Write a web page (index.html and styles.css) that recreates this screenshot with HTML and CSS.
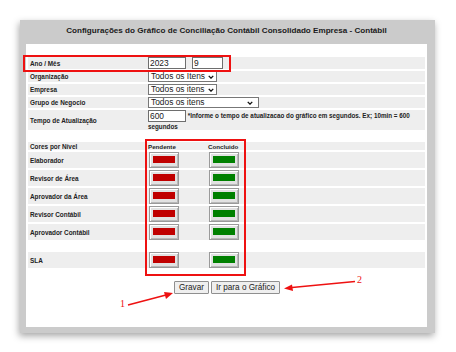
FILE: index.html
```html
<!DOCTYPE html>
<html lang="pt-BR">
<head>
    <meta charset="UTF-8">
    <title>Configurações do Gráfico</title>
    <link rel="stylesheet" href="styles.css">
</head>
<body>
    <div class="window">
        <h1 class="title">Configurações do Gráfico de Conciliação Contábil Consolidado Empresa - Contábil</h1>

        <div class="panel">
            <table class="form">
                <colgroup>
                    <col class="c-label">
                    <col class="c-cor">
                    <col class="c-cor">
                    <col>
                </colgroup>
                <tr class="row row-ano">
                    <td class="label">Ano / Mês</td>
                    <td class="value" colspan="3">
                        <span class="input input-ano">2023</span><span class="input input-mes">9</span>
                    </td>
                </tr>
                <tr class="row row-sel">
                    <td class="label">Organização</td>
                    <td class="value" colspan="3">
                        <span class="select select-short">Todos os Itens<svg class="chev" viewBox="0 0 8 5"><path d="M1 1 L4 4 L7 1"/></svg></span>
                    </td>
                </tr>
                <tr class="row row-sel">
                    <td class="label">Empresa</td>
                    <td class="value" colspan="3">
                        <span class="select select-short">Todos os itens<svg class="chev" viewBox="0 0 8 5"><path d="M1 1 L4 4 L7 1"/></svg></span>
                    </td>
                </tr>
                <tr class="row row-sel">
                    <td class="label">Grupo de Negocio</td>
                    <td class="value" colspan="3">
                        <span class="select select-long">Todos os itens<svg class="chev" viewBox="0 0 8 5"><path d="M1 1 L4 4 L7 1"/></svg></span>
                    </td>
                </tr>
                <tr class="row row-tempo">
                    <td class="label">Tempo de Atualização</td>
                    <td class="value hint" colspan="3"><span class="input input-tempo">600</span> *Informe o tempo de atualizacao do gráfico em segundos. Ex; 10min = 600 segundos</td>
                </tr>
                <tr class="spacer"><td colspan="4"></td></tr>
                <tr class="row row-head">
                    <td class="label">Cores por Nível</td>
                    <td class="col-p">Pendente</td>
                    <td class="col-c">Concluido</td>
                    <td></td>
                </tr>
                <tr class="row row-cor">
                    <td class="label">Elaborador</td>
                    <td class="col-p"><span class="swatch"><span class="fill red"></span></span></td>
                    <td class="col-c"><span class="swatch"><span class="fill green"></span></span></td>
                    <td></td>
                </tr>
                <tr class="row row-cor">
                    <td class="label">Revisor de Área</td>
                    <td class="col-p"><span class="swatch"><span class="fill red"></span></span></td>
                    <td class="col-c"><span class="swatch"><span class="fill green"></span></span></td>
                    <td></td>
                </tr>
                <tr class="row row-cor">
                    <td class="label">Aprovador da Área</td>
                    <td class="col-p"><span class="swatch"><span class="fill red"></span></span></td>
                    <td class="col-c"><span class="swatch"><span class="fill green"></span></span></td>
                    <td></td>
                </tr>
                <tr class="row row-cor">
                    <td class="label">Revisor Contábil</td>
                    <td class="col-p"><span class="swatch"><span class="fill red"></span></span></td>
                    <td class="col-c"><span class="swatch"><span class="fill green"></span></span></td>
                    <td></td>
                </tr>
                <tr class="row row-cor">
                    <td class="label">Aprovador Contábil</td>
                    <td class="col-p"><span class="swatch"><span class="fill red"></span></span></td>
                    <td class="col-c"><span class="swatch"><span class="fill green"></span></span></td>
                    <td></td>
                </tr>
                <tr class="spacer spacer-sla"><td colspan="4"></td></tr>
                <tr class="row row-cor">
                    <td class="label">SLA</td>
                    <td class="col-p"><span class="swatch"><span class="fill red"></span></span></td>
                    <td class="col-c"><span class="swatch"><span class="fill green"></span></span></td>
                    <td></td>
                </tr>
            </table>

            <div class="actions">
                <button class="btn">Gravar</button>
                <button class="btn">Ir para o Gráfico</button>
            </div>
        </div>
    </div>

    <!-- anotações por cima do print -->
    <div class="mark mark-ano"></div>
    <div class="mark mark-cores"></div>

    <svg class="arrows" width="456" height="352" viewBox="0 0 456 352">
        <line x1="128" y1="305" x2="166" y2="295" />
        <polygon points="173,293 164,292 166,299" />
        <line x1="355" y1="281.5" x2="292" y2="287.5" />
        <polygon points="284,288.5 292,284.5 293,291" />
    </svg>
    <span class="num num-1">1</span>
    <span class="num num-2">2</span>
</body>
</html>
```

FILE: styles.css
```css
* {
    margin: 0;
    padding: 0;
    box-sizing: border-box;
}

body {
    background-color: #ffffff;
    font-family: "Liberation Sans", Arial, sans-serif;
    color: #1a1a1a;
    width: 456px;
    height: 352px;
    position: relative;
    overflow: hidden;
}

.window {
    margin: 20px 0 0 20px;
    width: 415px;
    height: 313px;
    background-color: #cbcbcb;
    padding: 0 8px 6px 6px;
    box-shadow: -1px 3px 7px rgba(0, 0, 0, 0.35);
    display: flex;
    flex-direction: column;
}

.title {
    height: 24px;
    line-height: 21px;
    text-align: center;
    font-size: 8.1px;
    font-weight: bold;
    color: #1a1a1a;
}

.panel {
    flex: 1;
    background-color: #ffffff;
    padding: 11px 2px 0 2px;
}

.form {
    width: 397px;
    border-collapse: separate;
    border-spacing: 0 2px;
    table-layout: fixed;
}

.c-label { width: 120px; }
.c-cor { width: 60px; }

.form td {
    padding: 0;
    vertical-align: middle;
}

.row td {
    background-color: #eeeeee;
}

.label {
    padding-left: 2px !important;
    font-size: 6.4px;
    font-weight: bold;
    color: #222;
    line-height: 7px;
}

.row-ano td { height: 12px; }
.row-sel td { height: 11px; }
.row-tempo td { height: 18px; }
.row-head td { height: 8px; }
.row-cor td { height: 16px; }
.spacer td { height: 8px; }
.spacer-sla td { height: 8px; }

.value {
    font-size: 8px;
    line-height: 1;
}

.input {
    display: inline-block;
    height: 12px;
    border: 1px solid #6e6e6e;
    background-color: #ffffff;
    font-size: 8.4px;
    font-weight: normal;
    line-height: 10px;
    padding-left: 1px;
    vertical-align: top;
}

.input-ano { width: 38px; }
.input-mes { width: 31px; margin-left: 6px; }
.input-tempo { width: 38px; vertical-align: middle; margin-bottom: 1px; }

.select {
    display: inline-flex;
    align-items: center;
    justify-content: space-between;
    height: 11px;
    border: 1px solid #777;
    background-color: #ffffff;
    font-size: 8.4px;
    padding: 0 2px;
    vertical-align: top;
}

.select-short { width: 69px; }
.select-long { width: 111px; padding-right: 5px; }

.chev {
    width: 6px;
    height: 4px;
    fill: none;
    stroke: #111;
    stroke-width: 1.8;
}

.hint {
    font-size: 6.3px;
    font-weight: bold;
    color: #222;
    line-height: 7px;
}

.col-p,
.col-c {
    font-size: 6.2px;
    font-weight: bold;
    color: #222;
    line-height: 7px;
}

.row-head td {
    vertical-align: bottom;
}

.swatch {
    display: block;
    width: 30px;
    height: 16px;
    margin-left: 1px;
    border: 1px solid #9a9a9a;
    background-color: #e2e2e2;
    box-shadow: inset 1px 1px 0 #ffffff, inset -1px -1px 0 #b8b8b8;
    padding: 3px 3px 4px;
}

.fill {
    display: block;
    height: 100%;
}

.red { background-color: #c00000; }
.green { background-color: #008000; }

.actions {
    display: flex;
    justify-content: center;
    gap: 2px;
    margin-top: 11px;
    padding-left: 1px;
}

.btn {
    height: 13px;
    padding: 0 4px;
    font-family: "Liberation Sans", Arial, sans-serif;
    font-size: 8.2px;
    color: #222;
    background-color: #efefef;
    border: 1px solid #8f8f8f;
    border-radius: 1px;
}

.mark {
    position: absolute;
    border: 2px solid #ee1111;
}

.mark-ano {
    left: 23px;
    top: 55px;
    width: 208px;
    height: 17px;
}

.mark-cores {
    left: 145px;
    top: 139px;
    width: 101px;
    height: 137px;
}

.arrows {
    position: absolute;
    left: 0;
    top: 0;
}

.arrows line {
    stroke: #ee1111;
    stroke-width: 1.6;
}

.arrows polygon {
    fill: #ee1111;
}

.num {
    position: absolute;
    font-family: "Liberation Serif", "Times New Roman", serif;
    font-size: 10px;
    color: #ee1111;
}

.num-1 { left: 120px; top: 298px; }
.num-2 { left: 357px; top: 274px; }
```
